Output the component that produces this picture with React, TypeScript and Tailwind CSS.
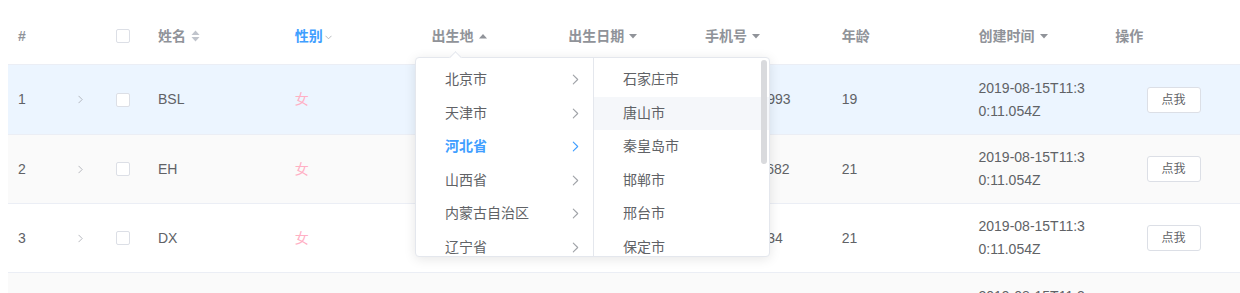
import React from "react";

const FONT = '"Liberation Sans", "Noto Sans CJK SC", Arial, sans-serif';
const COLS = "grid grid-cols-[60px_38px_42px_repeat(8,136.75px)]";

function Checkbox() {
  return <span className="inline-block w-[14px] h-[14px] border border-[#dcdfe6] rounded-[2px] bg-white" />;
}

function Chevron({ color = "#909399", w = 6, h = 10 }: { color?: string; w?: number; h?: number }) {
  return (
    <svg width={w} height={h} viewBox="0 0 6 10" fill="none">
      <path d="M1 1 L5 5 L1 9" stroke={color} strokeWidth="1" strokeLinecap="round" strokeLinejoin="round" />
    </svg>
  );
}

function CaretDown() {
  return (
    <svg width="8" height="5" viewBox="0 0 8 5" className="ml-[5px]">
      <path d="M0 0 H8 L4 4.5 Z" fill="#909399" />
    </svg>
  );
}
function CaretUp() {
  return (
    <svg width="8" height="5" viewBox="0 0 8 5" className="ml-[5px]">
      <path d="M0 4.5 H8 L4 0 Z" fill="#909399" />
    </svg>
  );
}
function SortBoth() {
  return (
    <svg width="9" height="12" viewBox="0 0 9 12" className="ml-[5px]">
      <path d="M0.5 5 H8.5 L4.5 0.5 Z" fill="#c0c4cc" />
      <path d="M0.5 7 H8.5 L4.5 11.5 Z" fill="#c0c4cc" />
    </svg>
  );
}
function FilterChevron() {
  return (
    <svg width="7" height="5" viewBox="0 0 7 5" className="ml-[2px] mt-[2px]">
      <path d="M0.5 0.8 L3.5 3.8 L6.5 0.8" stroke="#b0b3b8" strokeWidth="0.9" fill="none" />
    </svg>
  );
}

type Row = { id: number; name: string; phone: string; age: number };
const rows: Row[] = [
  { id: 1, name: "BSL", phone: "13520127993", age: 19 },
  { id: 2, name: "EH", phone: "18611470682", age: 21 },
  { id: 3, name: "DX", phone: "1592037834", age: 21 },
];
const rowBg = ["bg-[#ecf5ff] h-[70px]", "bg-[#fafafa] h-[69px]", "bg-white h-[69px]"];

function Header() {
  const cell = "flex items-center px-[10px]";
  return (
    <div className={`${COLS} h-[57px] border-b border-[#ebeef5] text-[14px] font-bold text-[#909399]`}>
      <div className={cell}>#</div>
      <div className={cell}></div>
      <div className={cell}><Checkbox /></div>
      <div className={cell}>姓名<SortBoth /></div>
      <div className={`${cell} text-[#409eff]`}>性别<FilterChevron /></div>
      <div className={cell}>出生地<CaretUp /></div>
      <div className={cell}>出生日期<CaretDown /></div>
      <div className={cell}>手机号<CaretDown /></div>
      <div className={cell}>年龄</div>
      <div className={cell}>创建时间<CaretDown /></div>
      <div className={cell}>操作</div>
    </div>
  );
}

function BodyRow({ r, i }: { r: Row; i: number }) {
  const cell = "flex items-center px-[10px]";
  return (
    <div className={`${COLS} ${rowBg[i]} border-b border-[#ebeef5] text-[14px] text-[#606266]`}>
      <div className={cell}>{r.id}</div>
      <div className={cell}><Chevron color="#a8abb2" w={5} h={9} /></div>
      <div className={cell}><Checkbox /></div>
      <div className={cell}>{r.name}</div>
      <div className={`${cell} text-[#ffb0c4]`}>女</div>
      <div className={cell}></div>
      <div className={cell}></div>
      <div className={cell}>{r.phone}</div>
      <div className={cell}>{r.age}</div>
      <div className={cell}>
        <div className="w-[112px] break-all leading-[23px]">2019-08-15T11:30:11.054Z</div>
      </div>
      <div className="flex items-center justify-center">
        <button className="w-[54px] h-[26px] border border-[#dcdfe6] rounded-[3px] bg-white text-[12px] text-[#606266] flex items-center justify-center">
          点我
        </button>
      </div>
    </div>
  );
}

function PartialRow() {
  const cell = "flex items-start px-[10px] pt-[12px]";
  return (
    <div className={`${COLS} bg-[#fafafa] h-[69px] text-[14px] text-[#606266]`}>
      <div className={cell}></div>
      <div className={cell}></div>
      <div className={cell}></div>
      <div className={cell}></div>
      <div className={cell}></div>
      <div className={cell}></div>
      <div className={cell}></div>
      <div className={cell}></div>
      <div className={cell}></div>
      <div className={cell}>
        <div className="w-[112px] break-all leading-[23px]">2019-08-15T11:30:11.054Z</div>
      </div>
      <div className={cell}></div>
    </div>
  );
}

const provinces = ["北京市", "天津市", "河北省", "山西省", "内蒙古自治区", "辽宁省"];
const cities = ["石家庄市", "唐山市", "秦皇岛市", "邯郸市", "邢台市", "保定市"];

function Cascader() {
  return (
    <div className="absolute left-[415px] top-[57px] w-[355px] h-[200px] bg-white border border-[#e4e7ed] rounded-[4px] shadow-[0_2px_12px_0_rgba(0,0,0,0.1)] flex text-[14px] text-[#606266]">
      <div className="absolute -top-[5px] left-[35px] w-[9px] h-[9px] bg-white border-t border-l border-[#e4e7ed] rotate-45" />
      <div className="w-[178px] h-full border-r border-[#e4e7ed] pt-[5px] overflow-hidden rounded-l-[4px]">
        {provinces.map((p) => {
          const active = p === "河北省";
          return (
            <div key={p} className={`h-[33.5px] flex items-center justify-between pl-[29px] pr-[14px] ${active ? "text-[#409eff] font-bold" : ""}`}>
              <span>{p}</span>
              <Chevron color={active ? "#409eff" : "#a0a3a8"} w={7} h={11} />
            </div>
          );
        })}
      </div>
      <div className="relative flex-1 h-full pt-[5px] overflow-hidden rounded-r-[4px]">
        {cities.map((c) => (
          <div key={c} className={`h-[33.5px] flex items-center pl-[29px] ${c === "唐山市" ? "bg-[#f5f7fa]" : ""}`}>
            {c}
          </div>
        ))}
        <div className="absolute right-[2px] top-[2px] w-[6px] h-[104px] rounded-[3px] bg-[#d9dadd]" />
      </div>
    </div>
  );
}

export default function App() {
  return (
    <div className="relative bg-white p-2 h-[293px] overflow-hidden" style={{ fontFamily: FONT }}>
      <div className="w-[1232px] overflow-hidden">
        <Header />
        {rows.map((r, i) => (
          <BodyRow key={r.id} r={r} i={i} />
        ))}
        <PartialRow />
      </div>
      <Cascader />
    </div>
  );
}
